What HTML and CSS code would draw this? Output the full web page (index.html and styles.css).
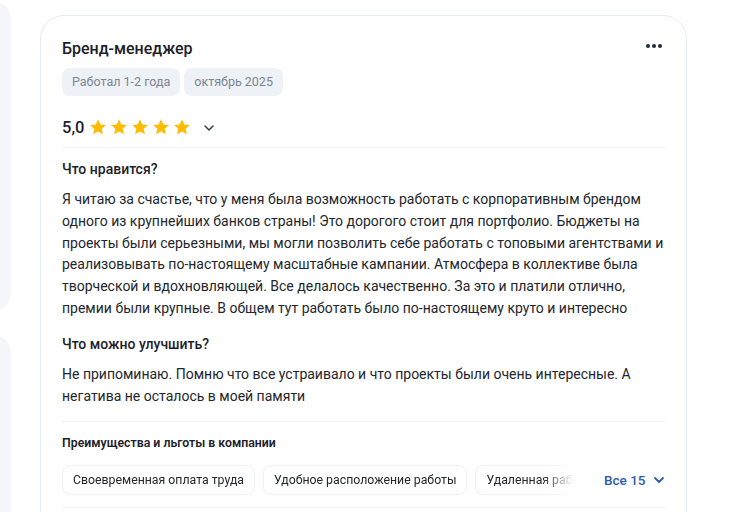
FILE: index.html
```html
<!DOCTYPE html>
<html lang="ru">
<head>
<meta charset="utf-8">
<link rel="stylesheet" href="styles.css">
</head>
<body>
<div class="page">
  <aside class="side">
    <div class="side-card side-card-top"></div>
    <div class="side-card side-card-bottom"></div>
  </aside>
  <main class="review">
    <div class="head">
      <div class="title">Бренд-менеджер</div>
      <button class="more" aria-label="Ещё">
        <svg width="16" height="4" viewBox="0 0 16 4"><circle cx="2" cy="2" r="2" fill="#1f2a3c"/><circle cx="8" cy="2" r="2" fill="#1f2a3c"/><circle cx="14" cy="2" r="2" fill="#1f2a3c"/></svg>
      </button>
    </div>
    <div class="tags">
      <span class="tag">Работал 1-2 года</span>
      <span class="tag">октябрь 2025</span>
    </div>
    <div class="rating">
      <span class="score">5,0</span>
      <span class="stars">
        <svg class="star" viewBox="0 0 24 24"><path d="M12 1.8l3.1 6.9 7.4.7-5.6 5 1.7 7.4L12 17.9l-6.6 3.9 1.7-7.4-5.6-5 7.4-.7z"/></svg>
        <svg class="star" viewBox="0 0 24 24"><path d="M12 1.8l3.1 6.9 7.4.7-5.6 5 1.7 7.4L12 17.9l-6.6 3.9 1.7-7.4-5.6-5 7.4-.7z"/></svg>
        <svg class="star" viewBox="0 0 24 24"><path d="M12 1.8l3.1 6.9 7.4.7-5.6 5 1.7 7.4L12 17.9l-6.6 3.9 1.7-7.4-5.6-5 7.4-.7z"/></svg>
        <svg class="star" viewBox="0 0 24 24"><path d="M12 1.8l3.1 6.9 7.4.7-5.6 5 1.7 7.4L12 17.9l-6.6 3.9 1.7-7.4-5.6-5 7.4-.7z"/></svg>
        <svg class="star" viewBox="0 0 24 24"><path d="M12 1.8l3.1 6.9 7.4.7-5.6 5 1.7 7.4L12 17.9l-6.6 3.9 1.7-7.4-5.6-5 7.4-.7z"/></svg>
      </span>
      <svg class="chev" width="12" height="8" viewBox="0 0 12 8"><path d="M2 2l4 4 4-4" fill="none" stroke="#3a4350" stroke-width="1.6" stroke-linecap="round" stroke-linejoin="round"/></svg>
    </div>
    <div class="divider"></div>
    <section class="block">
      <h3 class="q">Что нравится?</h3>
      <p class="a">Я читаю за счастье, что у меня была возможность работать с корпоративным брендом одного из крупнейших банков страны! Это дорогого стоит для портфолио. Бюджеты на проекты были серьезными, мы могли позволить себе работать с топовыми агентствами и реализовывать по-настоящему масштабные кампании. Атмосфера в коллективе была творческой и вдохновляющей. Все делалось качественно. За это и платили отлично, премии были крупные. В общем тут работать было по-настоящему круто и интересно</p>
    </section>
    <section class="block block-2">
      <h3 class="q">Что можно улучшить?</h3>
      <p class="a">Не припоминаю. Помню что все устраивало и что проекты были очень интересные. А негатива не осталось в моей памяти</p>
    </section>
    <div class="divider divider-2"></div>
    <h4 class="perks-title">Преимущества и льготы в компании</h4>
    <div class="perks">
      <div class="chips">
        <span class="chip">Своевременная оплата труда</span>
        <span class="chip">Удобное расположение работы</span>
        <span class="chip chip-cut">Удаленная работа</span>
      </div>
      <button class="all">Все 15
        <svg width="12" height="8" viewBox="0 0 12 8"><path d="M2 2l4 4 4-4" fill="none" stroke="#2d5bb0" stroke-width="1.8" stroke-linecap="round" stroke-linejoin="round"/></svg>
      </button>
    </div>
    <div class="divider divider-3"></div>
  </main>
</div>
</body>
</html>
```
FILE: styles.css
```css
* { box-sizing: border-box; }
html, body { margin: 0; padding: 0; background: #ffffff; }
body {
  font-family: Roboto, "Noto Sans", Arial, sans-serif;
  color: #23262c;
  width: 747px;
  height: 512px;
  overflow: hidden;
}
.page {
  display: flex;
  align-items: flex-start;
  gap: 29px;
}
.side {
  width: 211px;
  margin-left: -200px;
  display: flex;
  flex-direction: column;
  gap: 22px;
}
.side-card {
  background: #f5f6fa;
  border-radius: 20px;
}
.side-card-top { height: 312px; }
.side-card-bottom { height: 300px; }
.review {
  margin-top: 15px;
  width: 647px;
  border: 1px solid #e6eaf1;
  border-radius: 24px;
  padding: 19px 21px 40px 21px;
  background: #fff;
}
.head {
  display: flex;
  justify-content: space-between;
  align-items: center;
  height: 26px;
}
.title {
  font-size: 16px;
  font-weight: 500;
  color: #1d2129;
}
.more {
  border: 0;
  background: none;
  padding: 0;
  margin-right: 3px;
  display: flex;
  margin-top: -4px;
}
.tags {
  display: flex;
  gap: 4px;
  margin-top: 7px;
}
.tag {
  height: 28px;
  line-height: 28px;
  padding: 0 10px;
  background: #eef1f6;
  color: #7b8594;
  border-radius: 8px;
  font-size: 12.5px;
}
.rating {
  display: flex;
  align-items: center;
  height: 26px;
  margin-top: 18px;
}
.score {
  font-size: 16.5px;
  font-weight: 500;
  color: #1d2129;
  margin-right: 5px;
}
.stars { display: flex; gap: 3px; }
.star { width: 18px; height: 18px; fill: #ffbc00; }
.chev { margin-left: 12px; margin-top: 2px; }
.divider {
  height: 1px;
  background: #f1f3f7;
  margin-top: 7px;
}
.block { margin-top: 11px; }
.block-2 { margin-top: 14px; }
.q {
  margin: 0;
  font-size: 14px;
  font-weight: 500;
  line-height: 20px;
  color: #1d2129;
}
.a {
  margin: 10px 0 0;
  font-size: 14px;
  line-height: 21.8px;
  color: #23262c;
}
.divider-2 { margin-top: 14px; }
.perks-title {
  margin: 12px 0 0;
  font-size: 12.3px;
  font-weight: 600;
  line-height: 18px;
  color: #1d2129;
}
.perks {
  display: flex;
  align-items: center;
  margin-top: 13px;
}
.chips {
  flex: none;
  display: flex;
  gap: 8px;
  width: 515px;
  overflow: hidden;
  -webkit-mask-image: linear-gradient(to right, #000 480px, transparent 512px);
  mask-image: linear-gradient(to right, #000 480px, transparent 512px);
}
.chip {
  flex: none;
  height: 30px;
  line-height: 28px;
  padding: 0 10px;
  border: 1px solid #edf0f4;
  border-radius: 8px;
  font-size: 12.3px;
  color: #23262c;
  white-space: nowrap;
}
.chip-cut {
  flex: 1 1 auto;
  min-width: 0;
  overflow: hidden;
  border-right: 0;
  border-top-right-radius: 0;
  border-bottom-right-radius: 0;
}
.all {
  flex: none;
  margin-left: 27px;
  border: 0;
  background: none;
  padding: 0;
  display: flex;
  align-items: center;
  gap: 7px;
  white-space: nowrap;
  font-family: inherit;
  font-size: 13.5px;
  font-weight: 500;
  color: #2d5bb0;
}
.divider-3 { margin-top: 12px; }
```
